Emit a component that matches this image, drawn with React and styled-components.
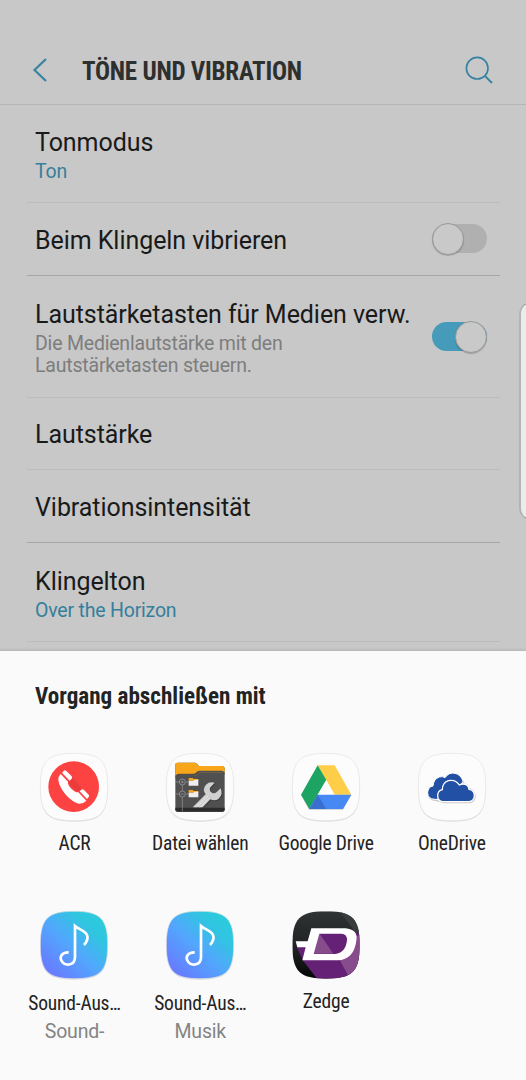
import React from "react";
import styled, { createGlobalStyle } from "styled-components";

const GlobalStyle = createGlobalStyle`
  * {
    box-sizing: border-box;
  }
  body {
    margin: 0;
    background-color: #c8c8c8;
    font-family: Roboto, sans-serif;
  }
`

const Screen = styled.div`
  width: 526px;
  height: 1080px;
  position: relative;
  overflow: hidden;
  display: flex;
  flex-direction: column;
  background-color: #c8c8c8;
`

const Header = styled.header`
  height: 105px;
  padding: 36px 33px 0 32px;
  border-bottom: 1px solid #b5b5b5;
  display: flex;
  align-items: center;
  flex-shrink: 0;
`

const BackIcon = styled.svg`
  width: 16px;
  height: 26px;
  margin-right: 34px;
`

const Title = styled.h1`
  margin: 0;
  padding-top: 4px;
  flex: 1;
  font-family: "Roboto Condensed", Roboto, sans-serif;
  font-stretch: 75%;
  font-size: 25px;
  font-weight: 700;
  letter-spacing: -0.25px;
  line-height: 30px;
  white-space: nowrap;
  color: #2e2f2f;
`

const SearchIcon = styled.svg`
  width: 28px;
  height: 28px;
`

const List = styled.main`
  height: 546px;
  padding: 0 26px 0 27px;
  overflow: hidden;
  flex-shrink: 0;
`

const Row = styled.div`
  height: ${(props) => props.$height}px;
  padding: 0 13px 0 8px;
  border-bottom: 1px solid ${(props) => (props.$strong ? "#a6a6a6" : "#bcbcbc")};
  display: flex;
  align-items: center;
  justify-content: space-between;
`

const RowBody = styled.div`
  padding-top: ${(props) => props.$top || 3}px;
`

const RowTitle = styled.div`
  font-size: 25px;
  letter-spacing: -0.06px;
  line-height: 30px;
  white-space: nowrap;
  color: #191a1a;
`

const RowText = styled.div`
  width: 280px;
  padding-top: 3px;
  font-size: 19.5px;
  letter-spacing: -0.2px;
  line-height: 22.5px;
  color: ${(props) => (props.$link ? "#367f9c" : "#7d7d7d")};
`

const Track = styled.div`
  width: 55px;
  height: 29px;
  margin-top: ${(props) => (props.$on ? "0" : "-1px")};
  border-radius: 15px;
  background-color: ${(props) => (props.$on ? "#459bb9" : "#b0b0b0")};
  display: flex;
  align-items: center;
  justify-content: ${(props) => (props.$on ? "flex-end" : "flex-start")};
`

const Knob = styled.div`
  width: 32px;
  height: 32px;
  flex-shrink: 0;
  border-radius: 50%;
  border: 1px solid #999;
  background-color: #c9c9c9;
  box-shadow: 0 1px 1px rgba(0, 0, 0, 0.2);
`

const EdgeHandle = styled.div`
  position: absolute;
  top: 303px;
  right: -14px;
  width: 21px;
  height: 216px;
  border: 1px solid #a2a2a2;
  border-left: 2px solid #b4b4b4;
  border-radius: 12px;
  background-color: #ebebeb;
`

const Sheet = styled.section`
  flex: 1;
  padding: 30px 11.6px 0;
  background-color: #fafafa;
  box-shadow: 0 -1px 3px rgba(0, 0, 0, 0.12);
  z-index: 1;
`

const SheetTitle = styled.h2`
  margin: 0 0 42px 23.4px;
  font-family: "Roboto Condensed", Roboto, sans-serif;
  font-stretch: 75%;
  font-size: 23.1px;
  font-weight: 700;
  line-height: 31px;
  white-space: nowrap;
  color: #222323;
`

const Grid = styled.div`
  display: grid;
  grid-template-columns: repeat(4, 125.8px);
  grid-auto-rows: 158px;
`

const AppItem = styled.div`
  display: flex;
  flex-direction: column;
  align-items: center;
`

const AppIcon = styled.svg`
  width: 68px;
  height: 68px;
  margin-top: -1px;
  overflow: visible;
`

const AppName = styled.div`
  margin-top: ${(props) => props.$top || 10}px;
  font-family: "Roboto Condensed", Roboto, sans-serif;
  font-stretch: 75%;
  font-size: 19.5px;
  letter-spacing: -0.2px;
  line-height: 26px;
  white-space: nowrap;
  color: #222;
`

const AppDetail = styled.div`
  margin-top: 2px;
  font-size: 19.5px;
  letter-spacing: -0.2px;
  line-height: 26px;
  color: #848484;
`

const SQUIRCLE = "M102 1 C181 1 203 23 203 102 C203 181 181 203 102 203 C23 203 1 181 1 102 C1 23 23 1 102 1Z"

function Plate({ x, y, fill = "#fcfcfc" }) {
  return (
    <g transform={`translate(${x} ${y})`}>
      <path d={SQUIRCLE} transform="translate(0 3)" fill="#d4d4d4" opacity=".8" />
      <path d={SQUIRCLE} fill={fill} stroke="#e2e2e2" strokeWidth="2" />
    </g>
  )
}

function AcrIcon() {
  return (
    <AppIcon viewBox="62 38 204 204">
      <Plate x={62} y={38} />
      <circle cx="163" cy="139" r="76" fill="#fd4242" />
      <path d="M158 110 L186 140 L182 152 L168 152 L148 128Z" fill="#ea3c3d" />
      <path d="M124 101 L146 124 Q144 133 156 145 Q168 157 177 156 L201 181 Q192 191 178 190 Q158 184 140 164 Q120 141 117 119 Q117 107 124 101Z" fill="#fff" />
      <path d="M128 97 L133 92 Q137 88 141 92 L157 108 Q160 112 157 115 L151 121Z M181 153 L186 148 Q190 145 194 149 L208 163 Q211 167 208 170 L203 176Z" fill="#fff" />
    </AppIcon>
  )
}

function FileIcon() {
  return (
    <AppIcon viewBox="79 38 204 204">
      <Plate x={79} y={38} />
      <path d="M107 208 V74 Q107 67 115 67 H165 Q170 67 173 72 L178 77 H246 Q255 77 255 86 V208 Q255 214 248 214 H114 Q107 214 107 208Z" fill="#505050" />
      <path d="M107 104 V74 Q107 67 115 67 H165 Q170 67 173 72 L178 77 H246 Q255 77 255 86 V96 H183 Q178 96 174 101 Q171 106 165 106 H112Z" fill="#faa61a" />
      <path d="M107 111 Q108 100 118 100 H160 Q168 100 171 95 Q174 91 181 91 H246 Q254 91 255 101 V104 Q253 96 246 96 H184 Q177 96 174 102 Q171 107 163 107 H118 Q110 107 107 115Z" fill="#505050" />
      <path d="M107 202 H255 V208 Q255 214 248 214 H114 Q107 214 107 208Z" fill="#2b2b2b" />
      <path d="M109 125 H119 M139 125 H147 M109 161 H119 M139 161 H147 M128 134 V152 M128 171 V213" stroke="#999" strokeWidth="2" />
      <g fill="none" stroke="#a5a5a5" strokeWidth="2">
        <circle cx="128" cy="125" r="9" />
        <circle cx="128" cy="161" r="9" />
        <path d="M124 125 H132 M128 121 V129 M124 161 H132" />
      </g>
      <path d="M147 113 H159 L162 116 H176 V121 H147Z M147 149 H159 L162 152 H176 V157 H147Z" fill="#faa61a" />
      <path d="M147 121 L161 121 L164 118 H176 V136 H147Z M147 157 L161 157 L164 154 H176 V171 H147Z" fill="#eee" />
      <path d="M161 202 L199 164 Q187 148 200 134 Q210 125 225 129 L211 143 Q208 153 218 158 Q226 160 232 154 L244 145 Q252 164 237 176 Q226 184 213 178 L190 202Z" fill="#3c3c3c" transform="translate(2 2)" />
      <path d="M159 201 L198 162 Q187 147 199 133 Q209 123 225 127 L211 142 Q208 153 218 158 Q226 160 232 154 L243 144 Q251 163 237 175 Q226 183 212 177 L189 201Z" fill="#d0d0d0" />
      <path d="M169 201 L205 165 M181 201 L208 174" stroke="#e6e6e6" strokeWidth="3" />
    </AppIcon>
  )
}

function DriveIcon() {
  return (
    <AppIcon viewBox="80 38 204 204">
      <Plate x={80} y={38} />
      <path d="M107 164 L131 209 H233 L258 164Z" fill="#bbb" opacity=".6" />
      <path d="M157 75 H208 L258 163 H207Z" fill="#ffce48" />
      <path d="M157 75 L183 119 L132 206 L107 163Z" fill="#1da362" />
      <path d="M183 119 L208 163 H157Z" fill="#fcfcfc" />
      <path d="M157 163 H258 L233 206 H132Z" fill="#4688f4" />
      <path d="M157 163 L183 206 H132Z" fill="#3970d0" />
    </AppIcon>
  )
}

function OneDriveIcon() {
  return (
    <AppIcon viewBox="53 38 204 204">
      <Plate x={53} y={38} />
      <g fill="#c8c8c8" transform="translate(3 4)">
        <path d="M104 178 Q81 178 81 158 Q82 140 99 138 Q101 117 119 112 Q130 108 138 113 Q149 97 166 101 Q184 105 188 123 L204 138 Q224 146 223 166 Q220 183 204 185 H128Z" />
      </g>
      <path d="M104 177 Q82 176 82 157 Q83 139 98 137 Q100 116 117 110 Q127 107 134 112 Q146 95 164 99 Q182 103 188 123 L174 148 L132 178Z" fill="#2150a5" stroke="#fff" strokeWidth="3" />
      <path d="M129 184 Q112 183 112 166 Q112 151 126 148 Q126 127 144 121 Q165 116 177 134 Q188 128 199 134 Q206 139 206 147 Q222 149 222 166 Q221 182 206 184Z" fill="#2150a5" stroke="#fff" strokeWidth="4" />
    </AppIcon>
  )
}

function SoundIcon({ id }) {
  return (
    <AppIcon viewBox="62 34 204 204">
      <defs>
        <linearGradient id={id} x1="0.1" y1="0.95" x2="0.9" y2="0.1">
          <stop offset="0" stopColor="#6a76ff" />
          <stop offset="0.48" stopColor="#52a7fd" />
          <stop offset="0.8" stopColor="#30c5e1" />
          <stop offset="1" stopColor="#2bcbdc" />
        </linearGradient>
      </defs>
      <Plate x={62} y={34} fill={`url(#${id})`} />
      <path d="M148 158 C127 158 117 173 130 188 C140 200 167 197 167 173 V79 C179 90 196 92 203 106 C208 117 201 128 194 136" fill="none" stroke="#fff" strokeWidth="8" />
    </AppIcon>
  )
}

function ZedgeIcon() {
  return (
    <AppIcon viewBox="66 34 204 204">
      <defs>
        <clipPath id="zedge">
          <path d={SQUIRCLE} transform="translate(66 34)" />
        </clipPath>
        <linearGradient id="zedgeDark" x1="0" y1="0" x2="0" y2="1">
          <stop offset="0" stopColor="#303334" />
          <stop offset="0.6" stopColor="#1d1f20" />
          <stop offset="1" stopColor="#050505" />
        </linearGradient>
      </defs>
      <g clipPath="url(#zedge)">
        <rect x="66" y="34" width="204" height="204" fill="url(#zedgeDark)" />
        <path d="M208 34 H270 V110 L254 96 L240 76Z" fill="#3a3d3e" />
        <path d="M80 142 L150 100 L235 90 L270 104 V238 H142 L100 184Z" fill="#642175" />
        <path d="M258 110 L270 106 V238 H240 L206 175Z" fill="#874c8c" />
        <path d="M148 103 H221 Q234 107 232 127 Q229 160 200 162 H128Z" fill="#642175" />
        <path d="M148 101 L190 162 H128Z" fill="#874c8c" />
      </g>
      <path fillRule="evenodd" d="M77 125 H113 L124 86 H226 Q265 89 259 123 Q252 179 203 182 H97 L107 143 H82Z M148 102 L131 163 H195 Q227 160 231 122 Q232 103 214 102Z" fill="#fff" />
    </AppIcon>
  )
}

function Toggle({ on }) {
  return (
    <Track $on={on}>
      <Knob />
    </Track>
  )
}

const settings = [
  { title: "Tonmodus", text: "Ton", link: true, height: 98, top: 4 },
  { title: "Beim Klingeln vibrieren", toggle: true, on: false, height: 73, strong: true },
  {
    title: "Lautstärketasten für Medien verw.",
    text: "Die Medienlautstärke mit den Lautstärketasten steuern.",
    toggle: true,
    on: true,
    height: 122,
    top: 4,
  },
  { title: "Lautstärke", height: 72 },
  { title: "Vibrationsintensität", height: 73, strong: true },
  { title: "Klingelton", text: "Over the Horizon", link: true, height: 99, top: 5 },
]

const apps = [
  { name: "ACR", icon: <AcrIcon /> },
  { name: "Datei wählen", icon: <FileIcon /> },
  { name: "Google Drive", icon: <DriveIcon /> },
  { name: "OneDrive", icon: <OneDriveIcon /> },
  { name: "Sound-Aus…", detail: "Sound-", icon: <SoundIcon id="soundA" />, top: 12 },
  { name: "Sound-Aus…", detail: "Musik", icon: <SoundIcon id="soundB" />, top: 12 },
  { name: "Zedge", icon: <ZedgeIcon /> },
]

function App() {
  return (
    <Screen>
      <GlobalStyle />
      <Header>
        <BackIcon viewBox="0 0 16 26" fill="none" stroke="#3584a3" strokeWidth="2.2">
          <path d="M14 2 L2.5 13 L14 24" />
        </BackIcon>
        <Title>TÖNE UND VIBRATION</Title>
        <SearchIcon viewBox="0 0 28 28" fill="none" stroke="#3584a3" strokeWidth="1.6">
          <circle cx="12.2" cy="12.2" r="10.8" />
          <path d="M19.6 19.6 L27 27" strokeWidth="2" />
        </SearchIcon>
      </Header>

      <List>
        {settings.map((item) => (
          <Row key={item.title} $height={item.height} $strong={item.strong}>
            <RowBody $top={item.top}>
              <RowTitle>{item.title}</RowTitle>
              {item.text && <RowText $link={item.link}>{item.text}</RowText>}
            </RowBody>
            {item.toggle && <Toggle on={item.on} />}
          </Row>
        ))}
      </List>

      <EdgeHandle />

      <Sheet>
        <SheetTitle>Vorgang abschließen mit</SheetTitle>
        <Grid>
          {apps.map((app, index) => (
            <AppItem key={index}>
              {app.icon}
              <AppName $top={app.top}>{app.name}</AppName>
              {app.detail && <AppDetail>{app.detail}</AppDetail>}
            </AppItem>
          ))}
        </Grid>
      </Sheet>
    </Screen>
  );
}

export default App;
